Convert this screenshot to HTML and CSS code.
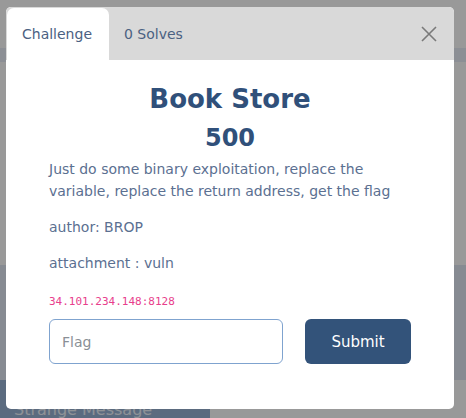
FILE: index.html
```html
<!DOCTYPE html>
<html>
<head>
<meta charset="utf-8">
<link rel="stylesheet" href="styles.css">
</head>
<body>
<div class="page">
  <div class="page-top"></div>
  <div class="page-band"></div>
  <div class="page-gap"></div>
  <div class="page-row"></div>
  <div class="page-foot"><span class="strange">Strange Message</span></div>
</div>
<div class="overlay"></div>
<div class="modal">
  <div class="tabs">
    <div class="tab active">Challenge</div>
    <div class="tab">0 Solves</div>
    <div class="close">
      <svg width="16" height="16" viewBox="0 0 16 16"><path d="M1 1 L15 15 M15 1 L1 15" stroke="#7a7a7a" stroke-width="1.6" fill="none"/></svg>
    </div>
  </div>
  <div class="body">
    <h2 class="name">Book Store</h2>
    <h3 class="value">500</h3>
    <p class="desc">Just do some binary exploitation, replace the variable, replace the return address, get the flag</p>
    <p class="meta">author: BROP</p>
    <p class="meta">attachment : vuln</p>
    <code class="host">34.101.234.148:8128</code>
    <div class="form">
      <div class="input">Flag</div>
      <div class="btn">Submit</div>
    </div>
  </div>
</div>
</body>
</html>
```
FILE: styles.css
```css
* { box-sizing: border-box; }
html, body { margin: 0; padding: 0; }
body {
  width: 466px;
  height: 418px;
  overflow: hidden;
  position: relative;
  background: #ffffff;
  font-family: "DejaVu Sans", sans-serif;
}
.page { display: flex; flex-direction: column; height: 418px; }
.page-top { height: 48px; }
.page-band { height: 14px; background: #e9eef9; }
.page-gap { height: 203px; }
.page-row { height: 115px; background: #e2e8f4; }
.page-foot { height: 38px; display: flex; }
.strange {
  width: 210px; background: #98b2d4; color: #edf3fb;
  font-size: 16px; line-height: 14px; padding: 23px 14px 0; white-space: nowrap; overflow: hidden;
}
.overlay { position: absolute; inset: 0; background: rgba(0,0,0,0.4); }
.modal {
  position: absolute; left: 6px; top: 7px; width: 448px; height: 402px;
  background: #fff; border-radius: 5px; overflow: hidden;
}
.tabs {
  height: 53px; background: #d9d9d9; display: flex; align-items: flex-end; padding-left: 1px;
}
.tab {
  height: 52px; padding: 0 16px 0 15px; display: flex; align-items: center;
  font-size: 14px; color: #4b6182; border-radius: 7px 7px 0 0;
}
.tab.active { background: #fff; width: 102px; }
.close { margin-left: auto; margin-right: 17px; height: 52px; display: flex; align-items: center; }
.body { padding: 0 43px; }
.name {
  margin: 23px 0 0; text-align: center; font-size: 26px; line-height: 32px;
  font-weight: 700; color: #30507a;
}
.value {
  margin: 8px 0 0; text-align: center; font-size: 24px; line-height: 30px;
  font-weight: 700; color: #30507a;
}
.desc { margin: 5px 0 0; font-size: 14px; line-height: 22px; color: #5b7091; }
.meta { margin: 14px 0 0; font-size: 14px; line-height: 22px; color: #5b7091; }
.host {
  display: block; margin-top: 21px; font-family: "DejaVu Sans Mono", monospace;
  font-size: 11px; line-height: 14px; color: #e83e8c;
}
.form { display: grid; grid-template-columns: 234px 106px; column-gap: 22px; margin-top: 10px; }
.input {
  height: 45px; border: 1px solid #7fa3cf; border-radius: 6px; padding: 0 12px;
  display: flex; align-items: center; font-size: 14px; color: #8a8f96;
}
.btn {
  height: 45px; background: #33537a; color: #fff; border-radius: 6px;
  display: flex; align-items: center; justify-content: center; font-size: 15px;
}
```
